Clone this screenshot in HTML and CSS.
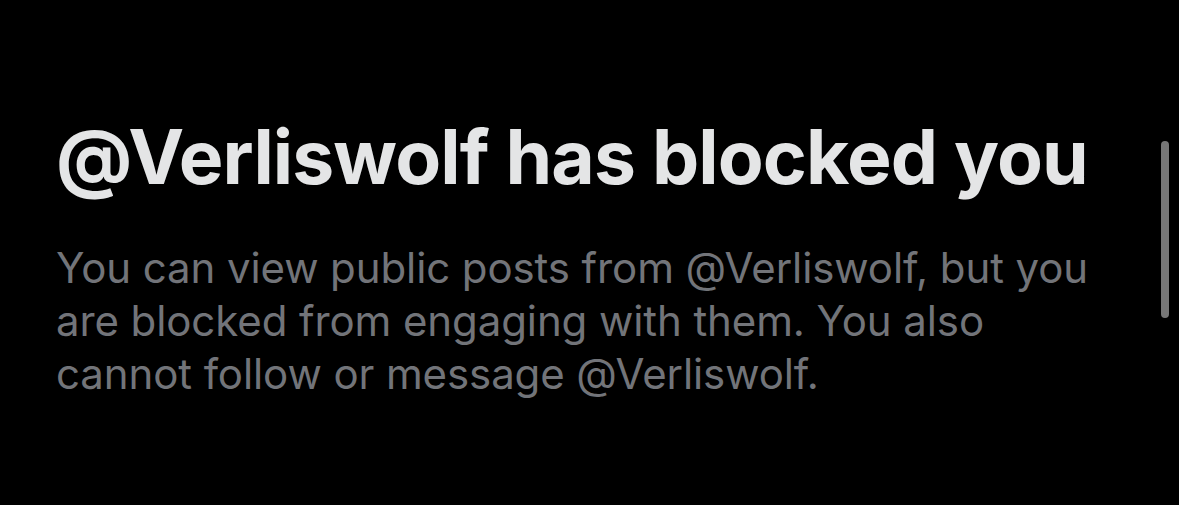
FILE: index.html
```html
<!DOCTYPE html>
<html>
<head>
<meta charset="utf-8">
<link rel="stylesheet" href="styles.css">
</head>
<body>
<div class="page">
  <main class="content">
    <h1 class="title">@Verliswolf has blocked you</h1>
    <p class="desc">You can view public posts from @Verliswolf, but you are blocked from engaging with them. You also cannot follow or message @Verliswolf.</p>
  </main>
  <div class="scrollbar"></div>
</div>
</body>
</html>
```
FILE: styles.css
```css
html, body {
  margin: 0;
  padding: 0;
  background: #000;
  width: 1179px;
  height: 505px;
  overflow: hidden;
}
.page {
  display: flex;
  justify-content: space-between;
  align-items: flex-start;
  height: 505px;
}
.content {
  padding: 112px 0 0 56px;
  width: 1060px;
}
.title {
  margin: 0;
  font-family: Inter, "Liberation Sans", sans-serif;
  font-weight: 700;
  font-size: 75px;
  line-height: 90px;
  color: #e4e5e6;
  letter-spacing: -0.9px;
  white-space: nowrap;
}
.desc {
  margin: 39px 0 0;
  font-family: Inter, "Liberation Sans", sans-serif;
  font-weight: 400;
  font-size: 42px;
  line-height: 53px;
  color: #727479;
  letter-spacing: -0.1px;
  width: 1045px;
}
.scrollbar {
  width: 8px;
  height: 177px;
  margin: 141px 10px 0 0;
  border-radius: 4px;
  background: #777;
}
```
